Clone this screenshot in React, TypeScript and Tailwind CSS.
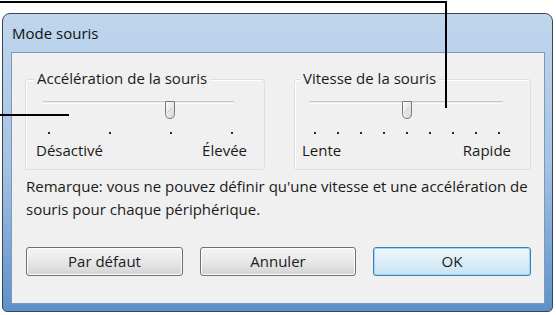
import React from "react";

const font = '"Open Sans","Noto Sans",sans-serif';

function Thumb() {
  return (
    <svg width="12" height="18" viewBox="0 0 12 18">
      <defs>
        <linearGradient id="thumbFill" x1="0" y1="0" x2="1" y2="1">
          <stop offset="0" stopColor="#fdfdfd" />
          <stop offset="1" stopColor="#d4d4d4" />
        </linearGradient>
      </defs>
      <path
        d="M1.5 0.5 H10.5 V12.5 Q10.5 17.5 6 17.5 Q1.5 17.5 1.5 12.5 Z"
        fill="url(#thumbFill)"
        stroke="#7a7a7a"
        strokeWidth="1"
      />
      <path d="M3 12 L8 7" stroke="#c9c9c9" strokeWidth="1" />
    </svg>
  );
}

type SliderProps = {
  trackClass: string;
  tickClass: string;
  thumbClass: string;
  ticks: number;
};

function Slider({ trackClass, tickClass, thumbClass, ticks }: SliderProps) {
  return (
    <>
      <div className={`relative mt-[21px] h-[18px] ${trackClass}`}>
        <div className="mt-[7px] h-[3px] border-t border-[#cacaca] bg-[#e8e8e8] border-b border-b-[#fbfbfb]" />
        <div className={`absolute top-0 ${thumbClass}`}>
          <Thumb />
        </div>
      </div>
      <div className={`mt-[13px] flex justify-between ${tickClass}`}>
        {Array.from({ length: ticks }).map((_, i) => (
          <div key={i} className="h-[2px] w-[2px] bg-[#2a2a2a]" />
        ))}
      </div>
    </>
  );
}

function Button({ label, primary }: { label: string; primary?: boolean }) {
  return (
    <button
      className={
        primary
          ? "h-[29px] rounded-[3px] border border-[#3c7fb1] bg-gradient-to-b from-[#eef7fd] via-[#dcedf8] to-[#c7e2f4] text-[15px] text-[#1b1b1b] shadow-[inset_0_0_0_1px_#9cd7f5]"
          : "h-[29px] rounded-[3px] border border-[#707070] bg-gradient-to-b from-[#f4f4f4] via-[#e8e8e8] to-[#d3d3d3] text-[15px] text-[#1b1b1b] shadow-[inset_0_0_0_1px_#fcfcfc]"
      }
    >
      {label}
    </button>
  );
}

export default function App() {
  return (
    <div
      className="relative h-[315px] w-[556px] overflow-hidden bg-white"
      style={{ fontFamily: font }}
    >
      {/* fenêtre */}
      <div className="ml-[2px] mt-[13px] h-[299px] w-[551px] rounded-t-[8px] rounded-b-[5px] border border-[#3a4656] bg-gradient-to-b from-[#c0d6ed] via-[#a5c3e4] to-[#5d91cc] px-[8px] pr-[7px]">
        <div className="flex h-[38px] items-center pl-[1px] text-[15px] text-[#111]">
          Mode souris
        </div>

        <div className="h-[252px] border border-[#7f98b6] bg-[#f0f0f0] text-[15px] text-[#1a1a1a]">
          {/* groupes */}
          <div className="ml-[13px] mt-[26px] flex gap-[29px]">
            <div className="relative h-[91px] w-[240px] rounded-[3px] border border-[#dadfe3] shadow-[inset_1px_1px_0_#ffffff]">
              <div className="absolute -top-[12px] left-[8px] bg-[#f0f0f0] px-[3px] leading-[20px]">
                Accélération de la souris
              </div>
              <Slider
                trackClass="ml-[17px] mr-[30px]"
                tickClass="ml-[22px] mr-[31px]"
                thumbClass="left-[121px]"
                ticks={4}
              />
              <div className="mt-[7px] flex justify-between pl-[10px] pr-[17px] leading-[18px]">
                <span>Désactivé</span>
                <span>Élevée</span>
              </div>
            </div>

            <div className="relative h-[91px] w-[237px] rounded-[3px] border border-[#dadfe3] shadow-[inset_1px_1px_0_#ffffff]">
              <div className="absolute -top-[12px] left-[5px] bg-[#f0f0f0] px-[3px] leading-[20px]">
                Vitesse de la souris
              </div>
              <Slider
                trackClass="ml-[14px] mr-[27px]"
                tickClass="ml-[19px] mr-[30px]"
                thumbClass="left-[92px]"
                ticks={9}
              />
              <div className="mt-[7px] flex justify-between pl-[7px] pr-[19px] leading-[18px]">
                <span>Lente</span>
                <span>Rapide</span>
              </div>
            </div>
          </div>

          {/* remarque */}
          <p className="ml-[14px] mt-[5px] leading-[23px]">
            Remarque: vous ne pouvez définir qu'une vitesse et une accélération de
            <br />
            souris pour chaque périphérique.
          </p>

          {/* boutons */}
          <div className="ml-[14px] mt-[26px] grid w-[505px] grid-cols-[157px_156px_158px] gap-[17px]">
            <Button label="Par défaut" />
            <Button label="Annuler" />
            <Button label="OK" primary />
          </div>
        </div>
      </div>

      {/* lignes de renvoi */}
      <div className="absolute left-0 top-[1px] h-[2px] w-[447px] bg-black" />
      <div className="absolute left-[445px] top-[1px] h-[107px] w-[2px] bg-black" />
      <div className="absolute left-0 top-[114px] h-[2px] w-[69px] bg-black" />
    </div>
  );
}
